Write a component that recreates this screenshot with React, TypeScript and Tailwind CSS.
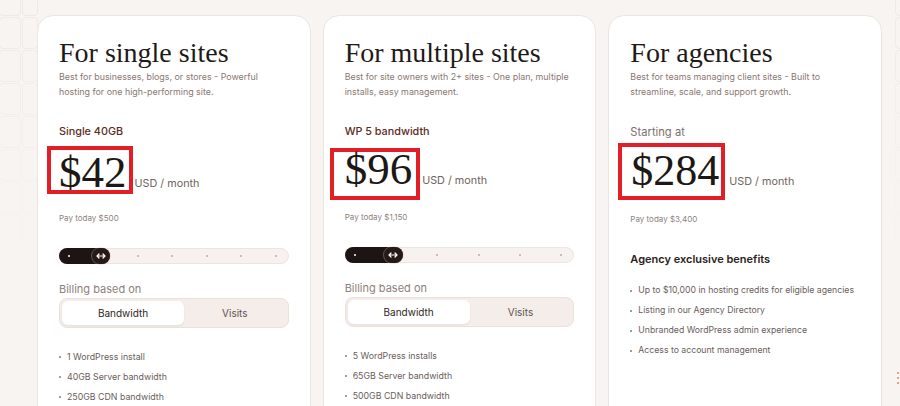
import type { ReactNode } from 'react';

const sans = "font-['Inter','Liberation_Sans',sans-serif]";
const serif = "font-['Liberation_Serif','Times_New_Roman',serif]";

function Tiles({ rows }: { rows: number }) {
  return (
    <div className="flex flex-col gap-[1px] -mt-[16px]">
      {Array.from({ length: rows }).map((_, i) => (
        <div
          key={i}
          className="h-[32px] rounded-[4px] border border-[#eee8e3]"
          style={{ opacity: Math.max(0.1, 0.9 - i * 0.12) }}
        />
      ))}
    </div>
  );
}

function Slider({ steps, fill, thumb }: { steps: number; fill: number; thumb: number }) {
  return (
    <div className="relative h-4 rounded-full border border-[#ede5e0] bg-[#f7f2ef] flex items-center justify-between pl-[8px] pr-[11px]">
      {Array.from({ length: steps }).map((_, i) => (
        <span key={i} className="w-[2px] h-[2px] rounded-full bg-[#b9aeaa]" />
      ))}
      {/* filled part of the range */}
      <div
        className="absolute -left-px -top-px -bottom-px rounded-full bg-[#1d1514] flex items-center justify-between pl-[9px]"
        style={{ width: fill }}
      >
        <span className="w-[2px] h-[2px] rounded-full bg-white" />
        <span
          className="h-full rounded-full bg-[#261a17] ring-1 ring-[#e9c4b8]/35 flex items-center justify-center"
          style={{ width: thumb }}
        >
          <svg width="10" height="6" viewBox="0 0 10 6" fill="none" stroke="white" strokeWidth="1.2" strokeLinecap="round" strokeLinejoin="round">
            <path d="M1 3h8M3 1 1 3l2 2M7 1l2 2-2 2" />
          </svg>
        </span>
      </div>
    </div>
  );
}

function BillingToggle() {
  return (
    <div className="mt-[1px] h-[30px] grid grid-cols-[122px_1fr] p-[2px] rounded-lg border border-[#ebe1db] bg-[#f4ede9]">
      <div className="rounded-md bg-white shadow-[0_1px_2px_rgba(60,30,20,0.08)] flex items-center justify-center text-[10px] text-[#2d2422]">
        Bandwidth
      </div>
      <div className="flex items-center justify-center text-[10px] text-[#5f5350]">Visits</div>
    </div>
  );
}

function Bullets({ items, className }: { items: string[]; className: string }) {
  return (
    <ul className={className}>
      {items.map((t) => (
        <li key={t} className="flex items-center h-[20px] whitespace-nowrap">
          <span className="w-[2px] h-[2px] rounded-full bg-[#8b7a75] mr-[6px]" />
          {t}
        </li>
      ))}
    </ul>
  );
}

function Card({ title, desc, children }: { title: string; desc: [string, string]; children: ReactNode }) {
  return (
    <div className="h-[420px] rounded-2xl border border-[#ece5e0] bg-white px-[21px] pt-[21px]">
      <h2 className={`${serif} text-[28px] leading-[32px] text-[#1f1917]`}>{title}</h2>
      <p className="text-[8.9px] leading-[15px] text-[#8a7772]">
        {desc[0]}
        <br />
        {desc[1]}
      </p>
      {children}
    </div>
  );
}

export default function App() {
  return (
    <div className={`${sans} h-[406px] w-[900px] overflow-hidden bg-[#f8f4f1] flex`}>
      <div className="w-[38px] shrink-0 grid grid-cols-[22px_16px] gap-x-[1px] -ml-[1px]">
        <Tiles rows={8} />
        <Tiles rows={8} />
      </div>

      <div className="w-[845px] shrink-0 grid grid-cols-3 gap-3 pt-[15px]">
        <Card
          title="For single sites"
          desc={['Best for businesses, blogs, or stores - Powerful', 'hosting for one high-performing site.']}
        >
          <div className="mt-[25px] text-[10.8px] leading-[16px] font-medium text-[#5c2b21]">Single 40GB</div>
          <div className="mt-[6px] flex items-baseline">
            <span className={`${serif} border-4 border-[#e21f26] text-[45px] leading-[36px] text-[#1d1716] -ml-[12px] pl-[8px] pr-[2px] pt-[4px]`}>
              $42
            </span>
            <span className="ml-[2px] text-[10.8px] text-[#6f6360]">USD / month</span>
          </div>
          <div className="mt-[18px] text-[8px] leading-[12px] text-[#8d817d]">Pay today $500</div>
          <div className="mt-[24px]">
            <Slider steps={7} fill={51} thumb={18} />
          </div>
          <div className="mt-[17px] text-[11px] leading-[16px] text-[#8e7f7b]">Billing based on</div>
          <BillingToggle />
          <Bullets
            className="mt-[19px] text-[8.8px] text-[#6a5d5a]"
            items={['1 WordPress install', '40GB Server bandwidth', '250GB CDN bandwidth']}
          />
        </Card>

        <Card
          title="For multiple sites"
          desc={['Best for site owners with 2+ sites - One plan, multiple', 'installs, easy management.']}
        >
          <div className="mt-[25px] text-[10.8px] leading-[16px] font-medium text-[#5c2b21]">WP 5 bandwidth</div>
          <div className="mt-[8px] flex items-baseline">
            <span className={`${serif} border-4 border-[#e21f26] text-[45px] leading-[34px] text-[#1d1716] -ml-[15px] pl-[11px] pr-[4px] pb-[10px]`}>
              $96
            </span>
            <span className="ml-[2px] text-[10.8px] text-[#6f6360]">USD / month</span>
          </div>
          <div className="mt-[11px] text-[8px] leading-[12px] text-[#8d817d]">Pay today $1,150</div>
          <div className="mt-[24px]">
            <Slider steps={6} fill={58} thumb={19} />
          </div>
          <div className="mt-[17px] text-[11px] leading-[16px] text-[#8e7f7b]">Billing based on</div>
          <BillingToggle />
          <Bullets
            className="mt-[19px] text-[8.8px] text-[#6a5d5a]"
            items={['5 WordPress installs', '65GB Server bandwidth', '500GB CDN bandwidth']}
          />
        </Card>

        <Card
          title="For agencies"
          desc={['Best for teams managing client sites - Built to', 'streamline, scale, and support growth.']}
        >
          <div className="mt-[25px] text-[11.2px] leading-[16px] text-[#7d6e6a]">Starting at</div>
          <div className="mt-[3px] flex items-baseline">
            <span className={`${serif} border-4 border-[#e21f26] text-[44px] leading-[40px] text-[#1d1716] -ml-[12px] pl-[9px] pr-[2px] pt-[4px] pb-[5px]`}>
              $284
            </span>
            <span className="ml-[4px] text-[10.8px] text-[#6f6360]">USD / month</span>
          </div>
          <div className="mt-[13px] text-[8px] leading-[12px] text-[#8d817d]">Pay today $3,400</div>
          <div className="mt-[26px] text-[11px] leading-[16px] font-semibold text-[#2b2220]">Agency exclusive benefits</div>
          <Bullets
            className="mt-[14px] text-[8.7px] text-[#6a5d5a]"
            items={[
              'Up to $10,000 in hosting credits for eligible agencies',
              'Listing in our Agency Directory',
              'Unbranded WordPress admin experience',
              'Access to account management',
            ]}
          />
        </Card>
      </div>

      <div className="w-[17px] shrink-0 flex">
        <div className="w-[13px] shrink-0" />
        <div className="w-[20px] shrink-0 flex flex-col justify-between">
          <Tiles rows={8} />
          <div className="flex flex-col gap-[3px] pl-[2px] pb-[22px]">
            <span className="w-[2px] h-[2px] bg-[#e4a58f]" />
            <span className="w-[2px] h-[2px] bg-[#e4a58f]" />
            <span className="w-[2px] h-[2px] bg-[#e4a58f]" />
          </div>
        </div>
      </div>
    </div>
  );
}
